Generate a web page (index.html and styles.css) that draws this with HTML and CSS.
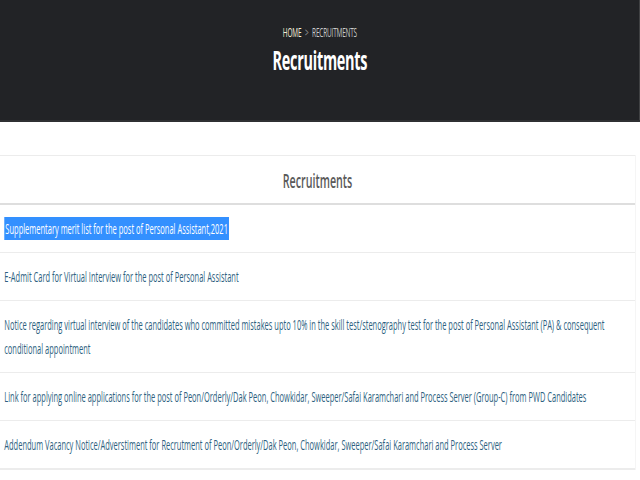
FILE: index.html
```html
<!DOCTYPE html>
<html lang="en">

<head>
    <meta charset="UTF-8">
    <meta name="viewport" content="width=device-width, initial-scale=1.0">
    <title>Recruitments</title>
    <link rel="stylesheet" href="styles.css">
</head>

<body>
    <div class="page">

        <!-- page banner -->
        <header class="banner">
            <div class="crumbs">
                <span class="crumb-home">HOME</span>
                <span class="crumb-sep">&gt;</span>
                <span>RECRUITMENTS</span>
            </div>
            <h1>Recruitments</h1>
        </header>

        <!-- list of notices -->
        <section class="panel">
            <h2 class="panel-title">Recruitments</h2>
            <ul class="notices">
                <li><a href="#"><span class="picked">Supplementary merit list for the post of Personal Assistant,2021</span></a></li>
                <li><a href="#">E-Admit Card for Virtual Interview for the post of Personal Assistant</a></li>
                <li><a href="#">Notice regarding virtual interview of the candidates who committed mistakes upto 10% in the skill test/stenography test for the post of Personal Assistant (PA) &amp; consequent conditional appointment</a></li>
                <li><a href="#">Link for applying online applications for the post of Peon/Orderly/Dak Peon, Chowkidar, Sweeper/Safai Karamchari and Process Server (Group-C) from PWD Candidates</a></li>
                <li><a href="#">Addendum Vacancy Notice/Adverstiment for Recrutment of Peon/Orderly/Dak Peon, Chowkidar, Sweeper/Safai Karamchari and Process Server</a></li>
            </ul>
        </section>

    </div>
</body>

</html>
```

FILE: styles.css
```css
body {
    margin: 0;
    background: white;
    font-family: "Open Sans", Arial, sans-serif;
    overflow: hidden;
}

/* the shot is squeezed sideways, so the whole page is */
.page {
    width: 1196px;
    transform: scaleX(0.535);
    transform-origin: 0 0;
}

.banner {
    height: 122px;
    background: #222326;
    border-bottom: 2px solid #2f3033;
    text-align: center;
    color: white;
    padding-top: 24px;
    box-sizing: border-box;
}

.crumbs {
    font-size: 12px;
    color: #c9c9c9;
    letter-spacing: -0.3px;
}

.crumb-home {
    color: #f3f0dc;
}

.crumb-sep {
    margin: 0 4px;
    color: #9a9a9a;
}

.banner h1 {
    margin: 0;
    font-size: 27px;
    font-weight: 700;
    letter-spacing: -0.5px;
}

.panel {
    margin: 33px 0 0 -1px;
    width: 1187px;
    border: 1px solid #ececec;
}

.panel-title {
    margin: 0;
    padding: 12px 0 9px;
    font-size: 20px;
    line-height: 26px;
    font-weight: 600;
    text-align: center;
    color: #5a5a5a;
    border-bottom: 2px solid #dedede;
}

.notices {
    list-style: none;
    margin: 0;
    padding: 0;
}

.notices li {
    padding: 12px 8px 11px;
    border-bottom: 1px solid #ececec;
    font-size: 14px;
    line-height: 24px;
}

.notices a {
    color: #2d5f80;
    text-decoration: none;
}

.picked {
    background: #3390ff;
    color: white;
    padding: 2px 2px;
}
```
